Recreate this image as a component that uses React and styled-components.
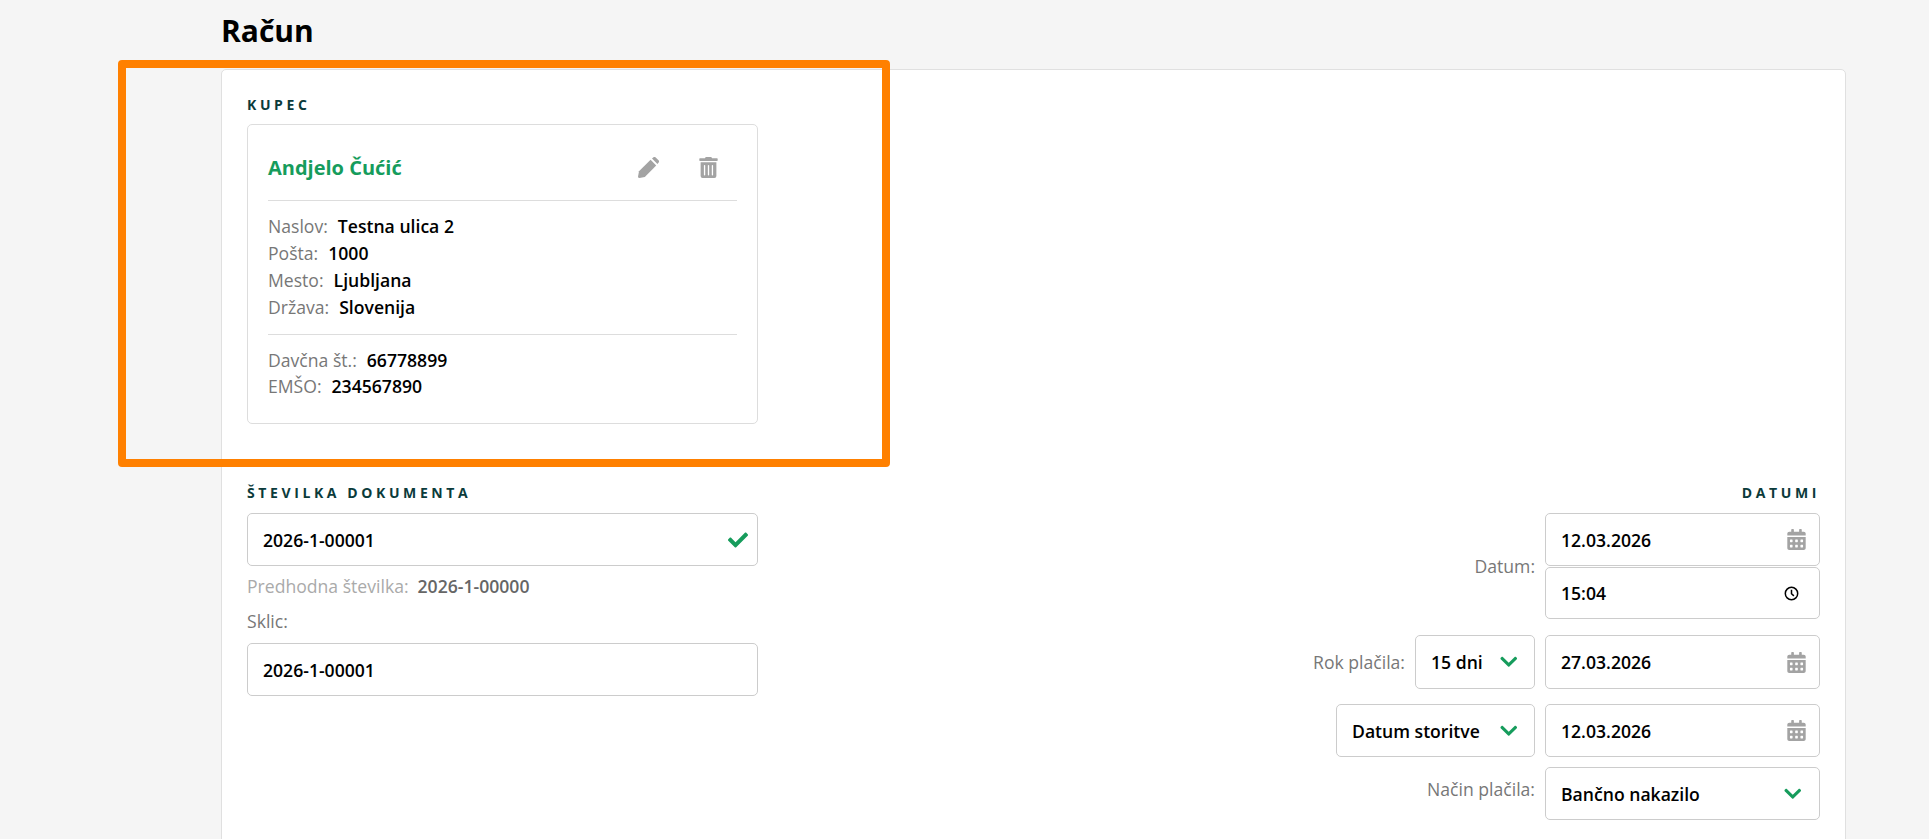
import React from 'react';
import styled, { createGlobalStyle } from 'styled-components';
import { FaTrashAlt, FaCalendarAlt, FaCheck, FaChevronDown } from 'react-icons/fa';

const GlobalStyle = createGlobalStyle`
  html, body {
    margin: 0;
    height: 100%;
    overflow: hidden;
    background: #f5f5f5;
    font-family: "Open Sans", "Liberation Sans", sans-serif;
    font-size: 17.6px;
    color: #000;
  }
`;

const Page = styled.div`
  position: relative;
  height: 839px;
  padding-left: 221px;
  overflow: hidden;
  box-sizing: border-box;
`;

const Title = styled.h1`
  margin: 0;
  height: 69px;
  padding-top: 11px;
  box-sizing: border-box;
  font-size: 30px;
  line-height: 40px;
  font-weight: 700;
`;

const Panel = styled.div`
  width: 1625px;
  min-height: 800px;
  box-sizing: border-box;
  padding: 25px 25px 0;
  background: #fff;
  border: 1px solid #e0e0e0;
  border-radius: 5px;
`;

const Heading = styled.div`
  height: 20px;
  font-size: 14px;
  line-height: 20px;
  font-weight: 700;
  letter-spacing: 3.6px;
  color: #0b3b3b;
  text-align: ${props => props.right ? 'right' : 'left'};
`;

const BuyerCard = styled.div`
  width: 511px;
  height: 300px;
  margin-top: 9px;
  padding: 0 20px;
  box-sizing: border-box;
  border: 1px solid #ddd;
  border-radius: 5px;
`;

const CardHeader = styled.div`
  display: flex;
  align-items: center;
  height: 76px;
  padding-top: 10px;
  box-sizing: border-box;
  border-bottom: 1px solid #ddd;
`;

const BuyerName = styled.div`
  flex: 1;
  font-size: 20px;
  font-weight: 700;
  color: #169c5c;
`;

const CardActions = styled.div`
  display: flex;
  align-items: center;
  gap: 39px;
  margin-right: 18px;
  color: #a3a3a3;
  svg { display: block; }
`;

const EditSvg = styled.svg`
  width: 21px;
  height: 21px;
`;

const TrashIcon = styled(FaTrashAlt)`
  font-size: 21px;
`;

const InfoGroup = styled.div`
  padding: ${props => props.last ? '12px 0' : '12px 0 13px'};
  border-bottom: ${props => props.last ? 'none' : '1px solid #ddd'};
`;

const InfoRow = styled.div`
  display: flex;
  gap: 10px;
  height: ${props => props.tight ? '26px' : '27px'};
  line-height: ${props => props.tight ? '26px' : '27px'};
`;

const InfoLabel = styled.span`
  color: #777;
`;

const InfoValue = styled.span`
  font-weight: 600;
`;

const Columns = styled.div`
  display: flex;
  justify-content: space-between;
  margin-top: 59px;
`;

const LeftColumn = styled.div`
  width: 511px;
`;

const RightColumn = styled.div`
  display: flex;
  flex-direction: column;
  align-items: flex-end;
`;

const Field = styled.div`
  display: flex;
  align-items: center;
  justify-content: space-between;
  width: ${props => props.width || '275px'};
  height: ${props => props.height || '53px'};
  padding: 0 ${props => props.iconRight || '16px'} 0 15px;
  box-sizing: border-box;
  background: #fff;
  border: 1px solid #ccc;
  border-radius: 5px;
  font-weight: 600;
  svg { display: block; flex: none; }
`;

const FullField = styled(Field)`
  margin-top: ${props => props.top || '10px'};
`;

const Previous = styled.div`
  display: flex;
  gap: 9px;
  margin-top: 9px;
  line-height: 22px;
  color: #aaa;
`;

const PreviousValue = styled.span`
  font-weight: 600;
  color: #666;
`;

const SideLabel = styled.div`
  margin-top: 13px;
  line-height: 22px;
  color: #777;
`;

const DateRow = styled.div`
  display: flex;
  align-items: ${props => props.top ? 'flex-start' : 'center'};
  gap: 10px;
  margin-top: ${props => props.gap || '0'};
`;

const Stack = styled.div`
  display: flex;
  flex-direction: column;
  gap: 1px;
`;

const RowLabel = styled.div`
  line-height: 22px;
  color: #777;
  margin-top: ${props => props.shift || '0'};
`;

const CheckIcon = styled(FaCheck)`
  color: #169c5c;
  font-size: 20px;
`;

const Chevron = styled(FaChevronDown)`
  color: #169c5c;
  font-size: 19.5px;
`;

const CalendarIcon = styled(FaCalendarAlt)`
  color: #a3a3a3;
  font-size: 21px;
`;

const ClockSvg = styled.svg`
  width: 15px;
  height: 15px;
  margin-right: 4px;
`;

const Highlight = styled.div`
  position: absolute;
  left: 118px;
  top: 60px;
  width: 772px;
  height: 407px;
  box-sizing: border-box;
  border: 8px solid #ff8000;
  border-radius: 4px;
  pointer-events: none;
`;

const EditIcon = () => (
  <EditSvg viewBox="0 0 21 21" fill="currentColor">
    <path d="M0 19.5 1 14.2 12.6 2.8 18.2 8.4 6.8 20 1.5 21Q0 21 0 19.5Z" />
    <path d="M14 1.6 15.2.5a1.8 1.8 0 0 1 2.5 0l2.8 2.8a1.8 1.8 0 0 1 0 2.5L19.4 7Z" />
  </EditSvg>
);

const ClockIcon = () => (
  <ClockSvg viewBox="0 0 15 15" fill="none" stroke="#000" strokeWidth="1.5">
    <circle cx="7.5" cy="7.5" r="6.2" />
    <path d="M7.5 3.8v3.9l2.4 2.2" />
  </ClockSvg>
);

const address = [
  ['Naslov:', 'Testna ulica 2'],
  ['Pošta:', '1000'],
  ['Mesto:', 'Ljubljana'],
  ['Država:', 'Slovenija'],
];

const tax = [
  ['Davčna št.:', '66778899'],
  ['EMŠO:', '234567890'],
];

const renderRows = (rows, tight) => rows.map(([label, value]) => (
  <InfoRow key={label} tight={tight}>
    <InfoLabel>{label}</InfoLabel>
    <InfoValue>{value}</InfoValue>
  </InfoRow>
));

export default function App() {
  return (
    <Page>
      <GlobalStyle />
      <Title>Račun</Title>
      <Panel>
        <Heading>KUPEC</Heading>
        <BuyerCard>
          <CardHeader>
            <BuyerName>Andjelo Čućić</BuyerName>
            <CardActions>
              <EditIcon />
              <TrashIcon />
            </CardActions>
          </CardHeader>
          <InfoGroup>{renderRows(address)}</InfoGroup>
          <InfoGroup last>{renderRows(tax, true)}</InfoGroup>
        </BuyerCard>

        <Columns>
          <LeftColumn>
            <Heading>ŠTEVILKA DOKUMENTA</Heading>
            <FullField width="511px" iconRight="9px">
              2026-1-00001
              <CheckIcon />
            </FullField>
            <Previous>
              Predhodna številka:
              <PreviousValue>2026-1-00000</PreviousValue>
            </Previous>
            <SideLabel>Sklic:</SideLabel>
            <FullField width="511px" top="11px">2026-1-00001</FullField>
          </LeftColumn>

          <RightColumn>
            <Heading right>DATUMI</Heading>
            <DateRow gap="10px">
              <RowLabel>Datum:</RowLabel>
              <Stack>
                <Field iconRight="12px">
                  12.03.2026
                  <CalendarIcon />
                </Field>
                <Field height="52px" iconRight="16px">
                  15:04
                  <ClockIcon />
                </Field>
              </Stack>
            </DateRow>
            <DateRow gap="16px">
              <RowLabel>Rok plačila:</RowLabel>
              <Field width="120px" height="54px" iconRight="16px">
                15 dni
                <Chevron />
              </Field>
              <Field height="54px" iconRight="12px">
                27.03.2026
                <CalendarIcon />
              </Field>
            </DateRow>
            <DateRow gap="15px">
              <Field width="199px" iconRight="16px">
                Datum storitve
                <Chevron />
              </Field>
              <Field iconRight="12px">
                12.03.2026
                <CalendarIcon />
              </Field>
            </DateRow>
            <DateRow gap="10px" top>
              <RowLabel shift="11px">Način plačila:</RowLabel>
              <Field iconRight="17px">
                Bančno nakazilo
                <Chevron />
              </Field>
            </DateRow>
          </RightColumn>
        </Columns>
      </Panel>
      <Highlight />
    </Page>
  );
}
